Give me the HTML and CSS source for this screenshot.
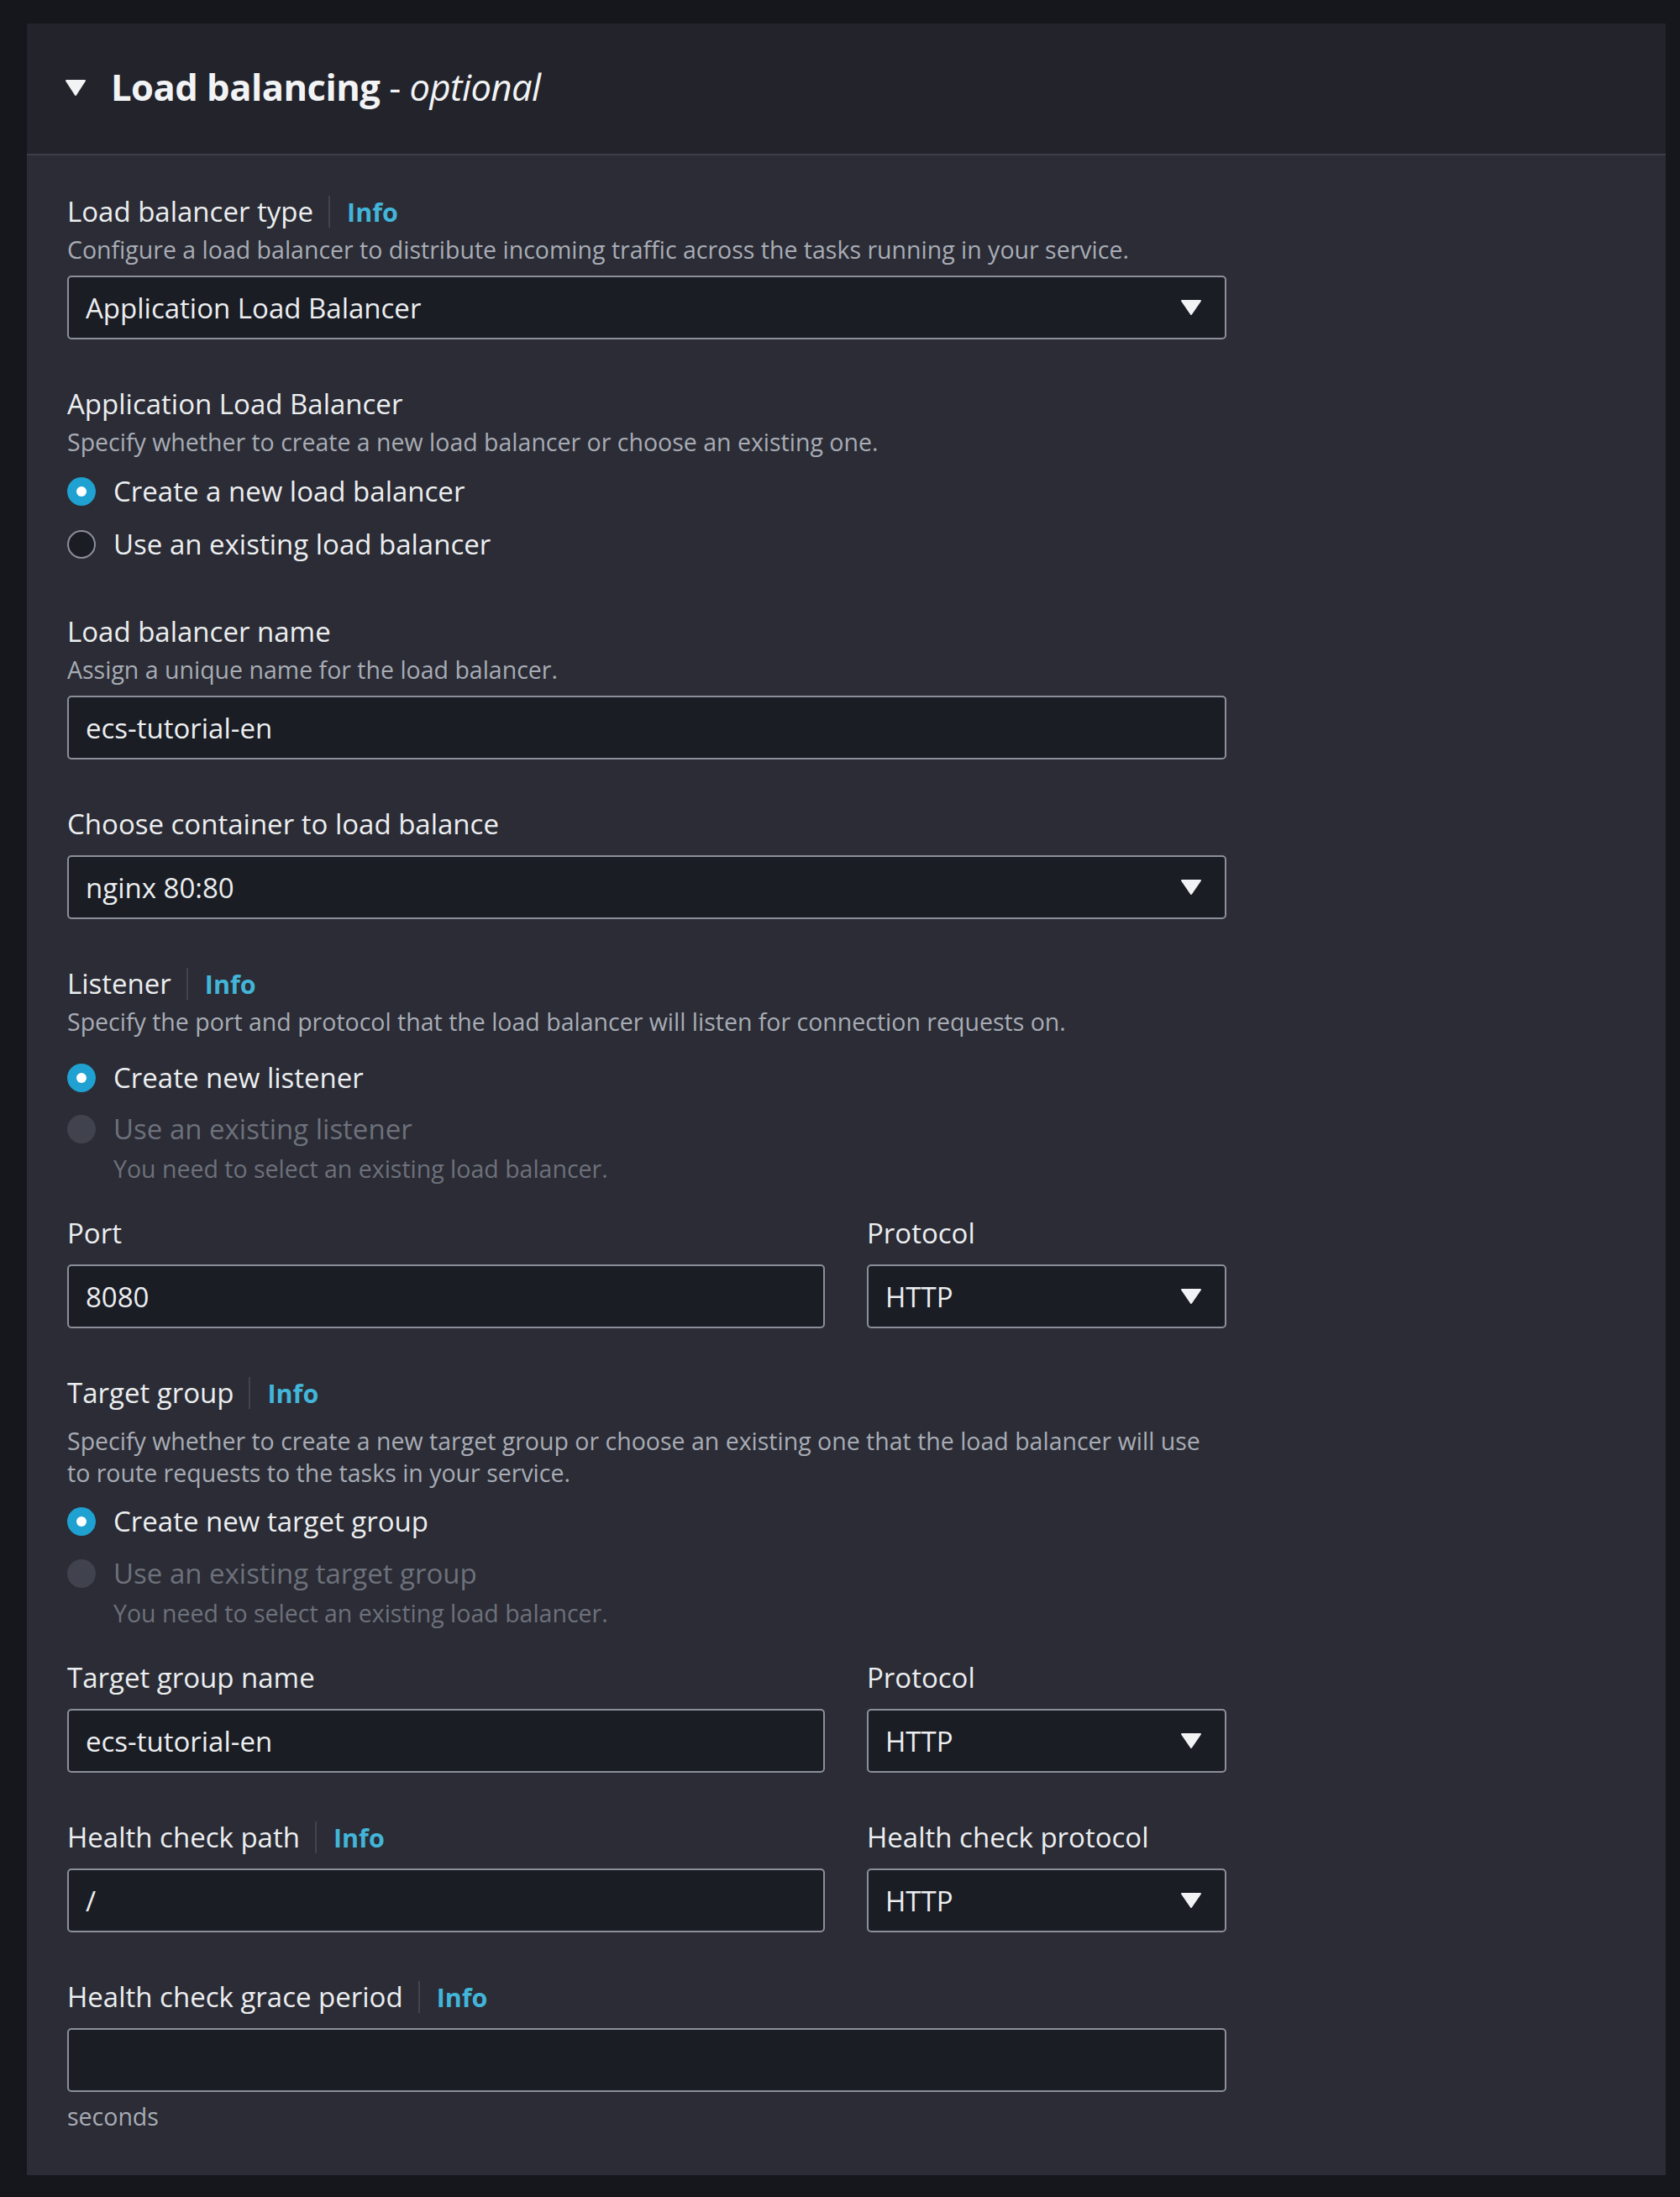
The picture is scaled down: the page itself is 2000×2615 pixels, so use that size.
FILE: index.html
```html
<!DOCTYPE html>
<html lang="en">
<head>
<meta charset="utf-8">
<title>Load balancing</title>
<link rel="stylesheet" href="styles.css">
</head>
<body>
<section class="panel">
  <header class="panel-header">
    <svg class="header-caret" viewBox="0 0 24 20" width="24" height="20"><path d="M1 2 H23 L12 19 Z" fill="#f2f3f5" stroke="#f2f3f5" stroke-width="2" stroke-linejoin="round"/></svg>
    <h2 class="title">Load balancing <span class="title-opt">- <i>optional</i></span></h2>
  </header>
  <div class="panel-body">
    <div class="form">

      <div class="field">
        <div class="label-row"><span class="label">Load balancer type</span><span class="sep"></span><a class="info">Info</a></div>
        <div class="desc">Configure a load balancer to distribute incoming traffic across the tasks running in your service.</div>
        <div class="control select after-desc"><span class="value">Application Load Balancer</span><svg class="caret" viewBox="0 0 26 20" width="26" height="20"><path d="M2 2 H24 L13 18 Z" fill="#f2f3f5" stroke="#f2f3f5" stroke-width="2" stroke-linejoin="round"/></svg></div>
      </div>

      <div class="field">
        <div class="label-row"><span class="label">Application Load Balancer</span></div>
        <div class="desc">Specify whether to create a new load balancer or choose an existing one.</div>
        <div class="radios r-alb">
          <div class="radio"><span class="dot checked"></span><span class="rlabel">Create a new load balancer</span></div>
          <div class="radio"><span class="dot"></span><span class="rlabel">Use an existing load balancer</span></div>
        </div>
      </div>

      <div class="field">
        <div class="label-row"><span class="label">Load balancer name</span></div>
        <div class="desc">Assign a unique name for the load balancer.</div>
        <div class="control after-desc"><span class="value">ecs-tutorial-en</span></div>
      </div>

      <div class="field">
        <div class="label-row"><span class="label">Choose container to load balance</span></div>
        <div class="control select after-label"><span class="value">nginx 80:80</span><svg class="caret" viewBox="0 0 26 20" width="26" height="20"><path d="M2 2 H24 L13 18 Z" fill="#f2f3f5" stroke="#f2f3f5" stroke-width="2" stroke-linejoin="round"/></svg></div>
      </div>

      <div class="field">
        <div class="label-row"><span class="label">Listener</span><span class="sep"></span><a class="info">Info</a></div>
        <div class="desc">Specify the port and protocol that the load balancer will listen for connection requests on.</div>
        <div class="radios r-listener with-helper">
          <div class="radio"><span class="dot checked"></span><span class="rlabel">Create new listener</span></div>
          <div class="radio disabled"><span class="dot"></span><div class="rtext"><span class="rlabel">Use an existing listener</span><span class="helper">You need to select an existing load balancer.</span></div></div>
        </div>
      </div>

      <div class="row">
        <div class="field">
          <div class="label-row"><span class="label">Port</span></div>
          <div class="control after-label"><span class="value">8080</span></div>
        </div>
        <div class="field">
          <div class="label-row"><span class="label">Protocol</span></div>
          <div class="control select after-label"><span class="value">HTTP</span><svg class="caret" viewBox="0 0 26 20" width="26" height="20"><path d="M2 2 H24 L13 18 Z" fill="#f2f3f5" stroke="#f2f3f5" stroke-width="2" stroke-linejoin="round"/></svg></div>
        </div>
      </div>

      <div class="field">
        <div class="label-row"><span class="label">Target group</span><span class="sep"></span><a class="info">Info</a></div>
        <div class="desc desc-tg">Specify whether to create a new target group or choose an existing one that the load balancer will use<br>to route requests to the tasks in your service.</div>
        <div class="radios r-tg with-helper">
          <div class="radio"><span class="dot checked"></span><span class="rlabel">Create new target group</span></div>
          <div class="radio disabled"><span class="dot"></span><div class="rtext"><span class="rlabel">Use an existing target group</span><span class="helper">You need to select an existing load balancer.</span></div></div>
        </div>
      </div>

      <div class="row">
        <div class="field">
          <div class="label-row"><span class="label">Target group name</span></div>
          <div class="control after-label"><span class="value">ecs-tutorial-en</span></div>
        </div>
        <div class="field">
          <div class="label-row"><span class="label">Protocol</span></div>
          <div class="control select after-label"><span class="value">HTTP</span><svg class="caret" viewBox="0 0 26 20" width="26" height="20"><path d="M2 2 H24 L13 18 Z" fill="#f2f3f5" stroke="#f2f3f5" stroke-width="2" stroke-linejoin="round"/></svg></div>
        </div>
      </div>

      <div class="row">
        <div class="field">
          <div class="label-row"><span class="label">Health check path</span><span class="sep"></span><a class="info">Info</a></div>
          <div class="control after-label"><span class="value">/</span></div>
        </div>
        <div class="field">
          <div class="label-row"><span class="label">Health check protocol</span></div>
          <div class="control select after-label"><span class="value">HTTP</span><svg class="caret" viewBox="0 0 26 20" width="26" height="20"><path d="M2 2 H24 L13 18 Z" fill="#f2f3f5" stroke="#f2f3f5" stroke-width="2" stroke-linejoin="round"/></svg></div>
        </div>
      </div>

      <div class="field">
        <div class="label-row"><span class="label">Health check grace period</span><span class="sep"></span><a class="info">Info</a></div>
        <div class="control after-label"><span class="value"></span></div>
        <div class="constraint">seconds</div>
      </div>

    </div>
  </div>
</section>
</body>
</html>
```
FILE: styles.css
```css
html, body {
  margin: 0;
  background: #16171c;
}
body {
  padding: 28px 17px 26px 32px;
  font-family: "Open Sans", Roboto, "Liberation Sans", sans-serif;
  color: #eceef0;
}
.panel {
  background: #2b2c35;
}
.panel-header {
  box-sizing: border-box;
  height: 157px;
  background: #23242b;
  border-bottom: 2px solid #3d3e49;
  display: flex;
  align-items: center;
  padding: 0 0 3px 46px;
  gap: 30px;
}
.header-caret {
  display: block;
}
.title {
  margin: 0;
  font-size: 43.5px;
  font-weight: 700;
  color: #f2f3f5;
  line-height: 50px;
  letter-spacing: -0.5px;
}
.title-opt {
  font-weight: 400;
}
.title-opt i {
  font-style: italic;
}
.panel-body {
  padding: 45px 0 51px 48px;
}
.form {
  width: 1380px;
  display: flex;
  flex-direction: column;
  gap: 55px;
}
.row {
  display: grid;
  grid-template-columns: 902px 428px;
  column-gap: 50px;
}
.label-row {
  display: flex;
  align-items: center;
  height: 44px;
}
.label {
  font-size: 33px;
  font-weight: 500;
  line-height: 44px;
  color: #eceef0;
}
.sep {
  width: 2px;
  height: 38px;
  background: #414350;
  margin: 0 20px 0 18px;
}
.info {
  font-size: 30.5px;
  font-weight: 700;
  color: #42b5d9;
  line-height: 44px;
}
.desc {
  margin-top: 4px;
  font-size: 28.5px;
  line-height: 38px;
  color: #a8acb5;
}
.desc-tg {
  margin-top: 16px;
}
.control {
  box-sizing: border-box;
  height: 76px;
  border: 2px solid #8b8f9a;
  border-radius: 5px;
  background: #1b1d24;
  display: flex;
  align-items: center;
  padding: 0 27px 0 20px;
}
.control.after-desc {
  margin-top: 12px;
}
.control.after-label {
  margin-top: 15px;
}
.value {
  flex: 1;
  font-size: 33px;
  font-weight: 500;
  color: #eceef0;
}
.caret {
  display: block;
  flex: none;
}
.radios {
  display: flex;
  flex-direction: column;
}
.r-alb {
  margin-top: 18px;
  gap: 19px;
  margin-bottom: 5px;
}
.r-listener {
  margin-top: 26px;
  gap: 17px;
}
.r-tg {
  margin-top: 17px;
  gap: 18px;
}
.with-helper {
  margin-bottom: -19px;
}
.radio {
  display: flex;
  align-items: flex-start;
  gap: 21px;
}
.dot {
  box-sizing: border-box;
  flex: none;
  width: 34px;
  height: 34px;
  margin-top: 5px;
  border-radius: 50%;
  border: 2px solid #8b8f9a;
  background: #1b1d24;
  position: relative;
}
.dot.checked {
  border: none;
  background: #1fa1d1;
}
.dot.checked::after {
  content: "";
  position: absolute;
  left: 11px;
  top: 11px;
  width: 12px;
  height: 12px;
  border-radius: 50%;
  background: #ffffff;
}
.radio.disabled .dot {
  border: none;
  background: #40434e;
}
.rtext {
  display: flex;
  flex-direction: column;
}
.rlabel {
  font-size: 33px;
  font-weight: 500;
  line-height: 44px;
  color: #eceef0;
}
.radio.disabled .rlabel {
  color: #6d717b;
}
.helper {
  margin-top: 6px;
  font-size: 28.5px;
  line-height: 38px;
  color: #6d717b;
}
.constraint {
  margin-top: 10px;
  font-size: 28.5px;
  line-height: 38px;
  color: #a8acb5;
}
```
